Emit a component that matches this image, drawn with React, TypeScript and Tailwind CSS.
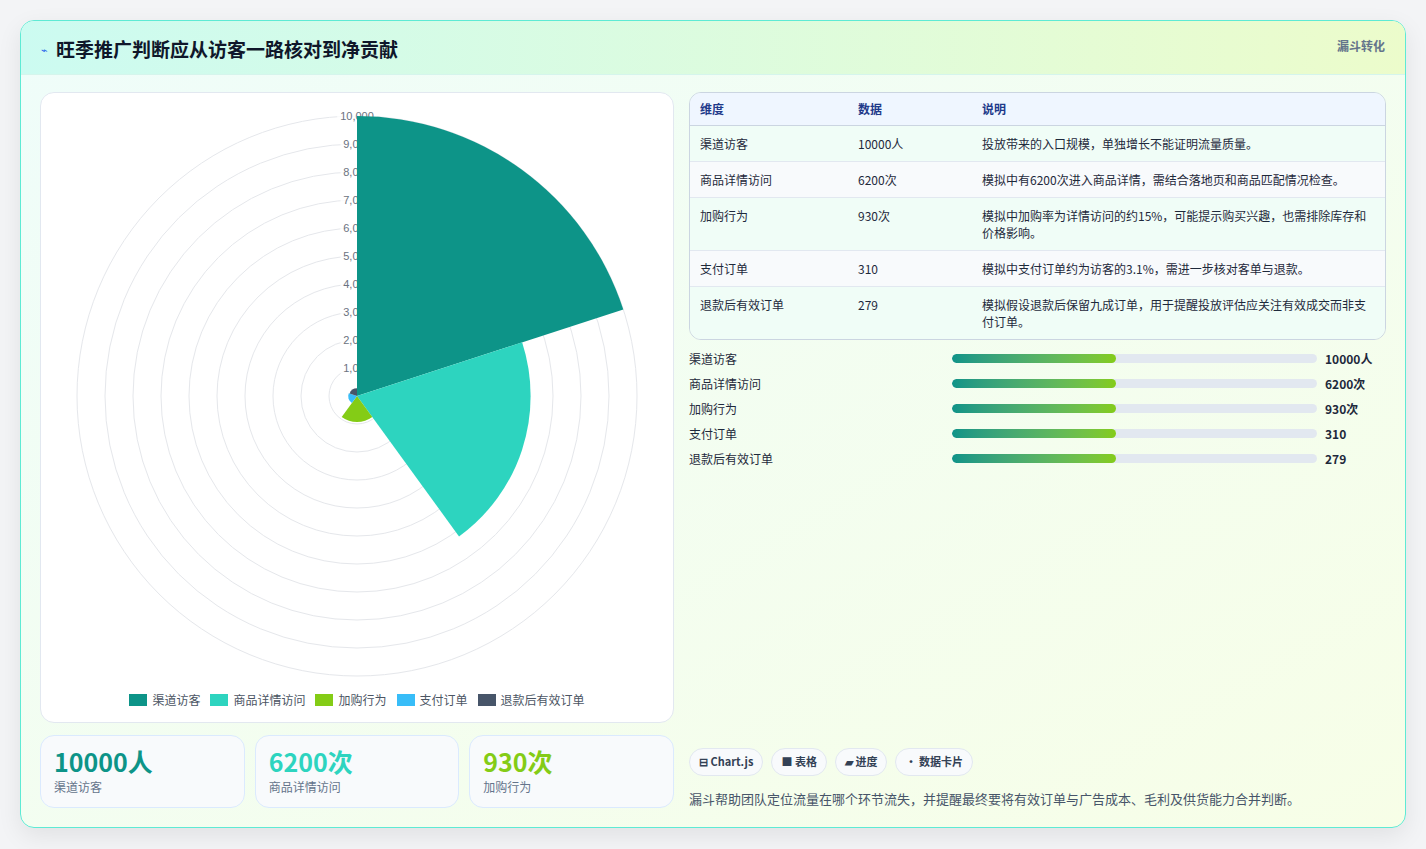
import React from "react";

const F = { fontFamily: '"Noto Sans CJK SC", "Noto Sans", sans-serif' };
const C = 356, RMAX = 280;
const data = [
  { n: "渠道访客", v: 10000, d: "10000人", c: "#0d9488", note: "投放带来的入口规模，单独增长不能证明流量质量。" },
  { n: "商品详情访问", v: 6200, d: "6200次", c: "#2dd4bf", note: "模拟中有6200次进入商品详情，需结合落地页和商品匹配情况检查。" },
  { n: "加购行为", v: 930, d: "930次", c: "#84cc16", note: "模拟中加购率为详情访问的约15%，可能提示购买兴趣，也需排除库存和价格影响。" },
  { n: "支付订单", v: 310, d: "310", c: "#38bdf8", note: "模拟中支付订单约为访客的3.1%，需进一步核对客单与退款。" },
  { n: "退款后有效订单", v: 279, d: "279", c: "#475569", note: "模拟假设退款后保留九成订单，用于提醒投放评估应关注有效成交而非支付订单。" },
];

function arc(r: number, a0: number, a1: number) {
  const t = (a: number) => (a * Math.PI) / 180;
  const x0 = 316 + r * Math.cos(t(a0)), y0 = 298 + r * Math.sin(t(a0));
  const x1 = 316 + r * Math.cos(t(a1)), y1 = 298 + r * Math.sin(t(a1));
  return `M316 298 L${x0} ${y0} A${r} ${r} 0 0 1 ${x1} ${y1} Z`;
}

function Chart() {
  return (
    <svg width="632" height="590" className="block">
      {Array.from({ length: 10 }, (_, i) => (
        <circle key={i} cx={316} cy={298} r={(i + 1) * 28} fill="none" stroke="#e5e7eb" strokeWidth="1" />
      ))}
      {Array.from({ length: 10 }, (_, i) => {
        const v = (i + 1) * 1000;
        const y = 298 - (i + 1) * 28;
        const t = v.toLocaleString("en-US");
        return (
          <g key={i}>
            <rect x={316 - t.length * 3.3} y={y - 6} width={t.length * 6.6} height={12} fill="white" opacity="0.8" />
            <text x={316} y={y + 4} textAnchor="middle" fontSize="11" fill="#6b7280" fontFamily="Liberation Sans, sans-serif">{t}</text>
          </g>
        );
      })}
      {data.map((d, i) => (
        <path key={i} d={arc((d.v / 10000) * RMAX, -90 + i * 72, -18 + i * 72)} fill={d.c} />
      ))}
    </svg>
  );
}

export default function App() {
  return (
    <div className="w-[1426px] h-[849px] bg-[#f3f4f6] pt-[20px] px-[20px]" style={F}>
      <div className="h-[808px] rounded-[14px] border border-[#5eead4] overflow-hidden bg-gradient-to-br from-[#effdfa] to-[#f7fee7] flex flex-col shadow-[0_8px_24px_rgba(0,0,0,0.08)]">
        <div className="h-[55px] flex items-start justify-between px-[20px] pt-[14px] bg-gradient-to-r from-[#ccfbf1] to-[#ecfccb] border-b border-[#d5f5ec]">
          <div className="flex items-center gap-[8px]">
            <span className="text-[#2563eb] text-[11px]">⌁</span>
            <span className="text-[19px] font-bold text-[#0f172a]">旺季推广判断应从访客一路核对到净贡献</span>
          </div>
          <span className="text-[12px] font-bold text-[#64748b] mt-[2px]">漏斗转化</span>
        </div>
        <div className="flex-1 flex gap-[15px] px-[19px] pt-[17px] pb-[19px]">
          <div className="w-[634px] flex flex-col gap-[12px]">
            <div className="h-[631px] bg-white rounded-[14px] border border-[#e2e8f0] flex flex-col items-center">
              <div className="pt-[5px]"><Chart /></div>
              <div className="flex items-center gap-[10px] mt-[3px] text-[12px] text-[#4b5563]">
                {data.map((d) => (
                  <div key={d.n} className="flex items-center gap-[5px]">
                    <span className="w-[18px] h-[12px]" style={{ background: d.c }} />
                    {d.n}
                  </div>
                ))}
              </div>
            </div>
            <div className="grid grid-cols-3 gap-[10px]">
              {data.slice(0, 3).map((d) => (
                <div key={d.n} className="h-[73px] rounded-[14px] border border-[#dbeafe] bg-[#f8fafc] px-[13px] pt-[8px]">
                  <div className="text-[25px] font-bold leading-[34px]" style={{ color: d.c }}>{d.d}</div>
                  <div className="text-[12px] text-[#64748b]">{d.n}</div>
                </div>
              ))}
            </div>
          </div>
          <div className="flex-1 flex flex-col">
            <div className="rounded-[12px] border border-[#cbd5e1] overflow-hidden text-[12px] text-[#1e293b]">
              <div className="flex h-[33px] items-center bg-[#eff6ff] text-[#1e3a8a] font-bold border-b border-[#cbd5e1]">
                <div className="w-[168px] pl-[10px]">维度</div>
                <div className="w-[124px]">数据</div>
                <div className="flex-1">说明</div>
              </div>
              {data.map((d, i) => (
                <div key={d.n} className={`flex py-[9px] leading-[17px] ${i % 2 ? "bg-[#f8fafc]" : "bg-[#f0fdf7]"} ${i < 4 ? "border-b border-[#e2e8f0]" : ""}`}>
                  <div className="w-[168px] pl-[10px]">{d.n}</div>
                  <div className="w-[124px]">{d.d}</div>
                  <div className="flex-1 pr-[10px]">{d.note}</div>
                </div>
              ))}
            </div>
            <div className="flex flex-col gap-[8px] mt-[10px]">
              {data.map((d) => (
                <div key={d.n} className="flex items-center h-[17px] text-[12px] text-[#1e293b]">
                  <div className="w-[263px]">{d.n}</div>
                  <div className="w-[365px] h-[9px] rounded-full bg-[#e2e8f0] overflow-hidden">
                    <div className="w-[45%] h-full rounded-full bg-gradient-to-r from-[#0d9488] to-[#84cc16]" />
                  </div>
                  <div className="ml-[8px] font-bold">{d.d}</div>
                </div>
              ))}
            </div>
            <div className="flex-1" />
            <div className="flex gap-[8px] text-[11px] font-bold text-[#334155]">
              {["⊟ Chart.js", "■ 表格", "▰ 进度", "• 数据卡片"].map((t) => (
                <span key={t} className="h-[28px] px-[9px] flex items-center rounded-full bg-[#f8fafc] border border-[#e2e8f0]">{t}</span>
              ))}
            </div>
            <div className="mt-[13px] text-[13px] text-[#475569]">漏斗帮助团队定位流量在哪个环节流失，并提醒最终要将有效订单与广告成本、毛利及供货能力合并判断。</div>
          </div>
        </div>
      </div>
    </div>
  );
}
